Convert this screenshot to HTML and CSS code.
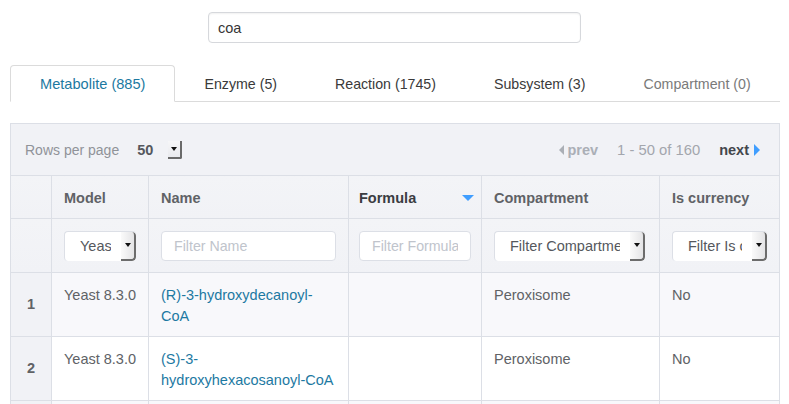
FILE: index.html
```html
<!DOCTYPE html>
<html lang="en">
<head>
<meta charset="utf-8">
<title>Search results</title>
<link rel="stylesheet" href="styles.css">
</head>
<body>
<div class="page">
  <div class="search-row">
    <input class="search-input" type="text" value="coa">
  </div>

  <ul class="tabs">
    <li class="tab is-active"><a>Metabolite (885)</a></li>
    <li class="tab"><a>Enzyme (5)</a></li>
    <li class="tab"><a>Reaction (1745)</a></li>
    <li class="tab"><a>Subsystem (3)</a></li>
    <li class="tab is-disabled"><a>Compartment (0)</a></li>
  </ul>

  <div class="table-wrap">
    <div class="toolbar">
      <div class="rpp">
        <span class="rpp-label">Rows per page</span>
        <span class="rpp-value">50</span>
        <span class="mini-select"><i class="caret"></i></span>
      </div>
      <div class="pager">
        <span class="page-btn is-disabled"><i class="tri-left"></i>prev</span>
        <span class="page-info">1 - 50 of 160</span>
        <span class="page-btn is-next">next<i class="tri-right"></i></span>
      </div>
    </div>

    <table class="grid">
      <colgroup>
        <col class="c-num"><col class="c-model"><col class="c-name"><col class="c-formula"><col class="c-comp"><col class="c-cur">
      </colgroup>
      <thead>
        <tr class="head-row">
          <th class="num"></th>
          <th>Model</th>
          <th>Name</th>
          <th class="sorted"><div class="sort-head"><span>Formula</span><i class="tri-down"></i></div></th>
          <th>Compartment</th>
          <th>Is currency</th>
        </tr>
        <tr class="filter-row">
          <th class="num"></th>
          <th><div class="fselect"><span class="fselect-text">Yeast 8.3.0</span><span class="fselect-btn"><i class="caret"></i></span></div></th>
          <th><input class="finput" type="text" placeholder="Filter Name"></th>
          <th class="f-formula"><input class="finput" type="text" placeholder="Filter Formula"></th>
          <th class="f-comp"><div class="fselect"><span class="fselect-text">Filter Compartment</span><span class="fselect-btn"><i class="caret"></i></span></div></th>
          <th><div class="fselect"><span class="fselect-text">Filter Is currency</span><span class="fselect-btn"><i class="caret"></i></span></div></th>
        </tr>
      </thead>
      <tbody>
        <tr class="odd">
          <td class="num">1</td>
          <td class="model">Yeast 8.3.0</td>
          <td><a class="link">(R)-3-hydroxydecanoyl-CoA</a></td>
          <td></td>
          <td>Peroxisome</td>
          <td>No</td>
        </tr>
        <tr>
          <td class="num">2</td>
          <td class="model">Yeast 8.3.0</td>
          <td><a class="link">(S)-3-hydroxyhexacosanoyl-CoA</a></td>
          <td></td>
          <td>Peroxisome</td>
          <td>No</td>
        </tr>
        <tr class="odd">
          <td class="num">3</td>
          <td class="model">Yeast 8.3.0</td>
          <td><a class="link">3-oxoacyl-CoA</a></td>
          <td></td>
          <td>Peroxisome</td>
          <td>No</td>
        </tr>
      </tbody>
    </table>
  </div>
</div>
</body>
</html>
```

FILE: styles.css
```css
* { box-sizing: border-box; }

html, body {
  margin: 0;
  padding: 0;
  background: #ffffff;
  overflow: hidden;
}

body {
  font-family: "Liberation Sans", Arial, Helvetica, sans-serif;
  font-size: 14.5px;
  color: #606266;
  height: 404px;
}

.page {
  width: 770px;
  margin-left: 10px;
  padding-top: 12px;
}

/* search */
.search-row {
  display: flex;
  justify-content: center;
  margin-left: -10px;
  width: 789px;
}

.search-input {
  width: 373px;
  height: 31px;
  border: 1px solid #d6d8dc;
  border-radius: 4px;
  box-shadow: inset 0 1px 2px rgba(10, 10, 10, 0.06);
  padding: 0 9px;
  font-family: inherit;
  font-size: 14.5px;
  color: #363636;
  outline: none;
}

/* tabs */
.tabs {
  list-style: none;
  margin: 22px 0 0 0;
  padding: 0;
  display: flex;
  border-bottom: 1px solid #dbdbdb;
  height: 37px;
}

.tab {
  flex: none;
  margin-bottom: -1px;
}

.tab a {
  display: flex;
  align-items: center;
  height: 37px;
  padding: 0 28px;
  white-space: nowrap;
  font-size: 14.2px;
  color: #3a3a3a;
  border: 1px solid transparent;
  border-radius: 4px 4px 0 0;
}

.tab.is-active a {
  padding: 0 29px;
  color: #1c79a1;
  background: #ffffff;
  border-color: #dbdbdb;
  border-bottom-color: #ffffff;
  font-size: 14.6px;
}

.tab.is-disabled a {
  color: #7a7a7a;
}

/* table wrapper */
.table-wrap {
  margin-top: 21px;
  border: 1px solid #dcdfe6;
  border-bottom: none;
  width: 770px;
}

.toolbar {
  height: 51px;
  background: #f1f2f6;
  display: flex;
  align-items: center;
  justify-content: space-between;
  padding: 0 19px 0 14px;
}

.rpp {
  display: flex;
  align-items: center;
}

.rpp-label {
  font-size: 14px;
  color: #909399;
}

.rpp-value {
  margin-left: 18px;
  font-weight: bold;
  font-size: 14.5px;
  color: #55585e;
}

.mini-select {
  margin-left: 15px;
  width: 14px;
  height: 18px;
  display: flex;
  align-items: center;
  justify-content: center;
  background: linear-gradient(#f6f6f8, #e9eaee);
  border-right: 2px solid #6a6a6a;
  border-bottom: 2px solid #6a6a6a;
  border-radius: 0 0 2px 0;
}

.caret {
  display: block;
  width: 0;
  height: 0;
  border-left: 3px solid transparent;
  border-right: 3px solid transparent;
  border-top: 4px solid #111;
}

.pager {
  display: flex;
  align-items: center;
}

.page-btn {
  display: flex;
  align-items: center;
  font-weight: bold;
  font-size: 14.5px;
}

.page-btn.is-disabled {
  color: #abafb6;
}

.page-btn.is-next {
  color: #43464c;
}

.page-info {
  margin: 0 19px;
  color: #a3a6ad;
  font-size: 14.8px;
}

.tri-left {
  display: block;
  width: 0;
  height: 0;
  border-top: 5px solid transparent;
  border-bottom: 5px solid transparent;
  border-right: 5px solid #abafb6;
  margin-right: 3px;
}

.tri-right {
  display: block;
  width: 0;
  height: 0;
  border-top: 6px solid transparent;
  border-bottom: 6px solid transparent;
  border-left: 6px solid #409eff;
  margin-left: 5px;
}

/* grid */
.grid {
  width: 768px;
  table-layout: fixed;
  border-collapse: separate;
  border-spacing: 0;
}

.c-num { width: 40px; }
.c-model { width: 97px; }
.c-name { width: 200px; }
.c-formula { width: 133px; }
.c-comp { width: 178px; }
.c-cur { width: 120px; }

.grid th,
.grid td {
  border-top: 1px solid #dcdfe6;
  border-left: 1px solid #dcdfe6;
  padding: 0 12px;
  text-align: left;
}

.grid th:first-child,
.grid td:first-child {
  border-left: none;
}

.head-row th {
  height: 43px;
  background: linear-gradient(#f3f4f7, #f1f2f6);
  font-weight: bold;
  color: #606266;
  vertical-align: middle;
  padding-top: 1px;
}

.head-row th.sorted {
  color: #3a3c41;
  padding-right: 7px;
  padding-left: 10px;
}

.sort-head {
  display: flex;
  align-items: center;
  justify-content: space-between;
}

.tri-down {
  display: block;
  width: 0;
  height: 0;
  border-left: 6px solid transparent;
  border-right: 6px solid transparent;
  border-top: 6px solid #409eff;
}

.filter-row th {
  height: 54px;
  background: linear-gradient(#f3f4f7, #f1f2f6);
  vertical-align: middle;
  font-weight: normal;
}

.filter-row th.f-formula {
  padding-left: 10px;
  padding-right: 10px;
}

.filter-row th.f-comp {
  padding-right: 14px;
}

.finput {
  display: block;
  width: 100%;
  height: 30px;
  border: 1px solid #dcdfe6;
  border-radius: 4px;
  background: #ffffff;
  padding: 0 12px;
  font-family: inherit;
  font-size: 14.2px;
  color: #606266;
  outline: none;
}

.finput::placeholder {
  color: #c0c4cc;
}

.fselect {
  display: flex;
  height: 30px;
  border: 1px solid #dcdfe6;
  border-right: none;
  border-bottom: none;
  border-radius: 4px;
  background: #ffffff;
  overflow: hidden;
}

.fselect-text {
  flex: 1;
  min-width: 0;
  overflow: hidden;
  white-space: nowrap;
  margin-left: 15px;
  margin-right: 10px;
  line-height: 29px;
  font-size: 14.5px;
  color: #55585d;
}

.fselect-btn {
  flex: none;
  width: 15px;
  display: flex;
  align-items: center;
  justify-content: center;
  background: linear-gradient(to right, #fafafa, #e4e4e6);
  border-right: 2px solid #6c6c6c;
  border-bottom: 2px solid #6c6c6c;
  border-radius: 0 4px 4px 0;
}

.grid td {
  height: 64px;
  vertical-align: top;
  padding-top: 12px;
  line-height: 21px;
  font-size: 14.5px;
  color: #606266;
  background: #ffffff;
}

.grid td.model {
  white-space: nowrap;
}

.grid tr.odd td {
  background: #f8f8fb;
}

.grid td.num,
.grid tr.odd td.num {
  background: #f1f2f6;
  vertical-align: middle;
  padding: 0;
  text-align: center;
  font-weight: bold;
  color: #606266;
}

.link {
  color: #1d79a2;
  text-decoration: none;
}
```
